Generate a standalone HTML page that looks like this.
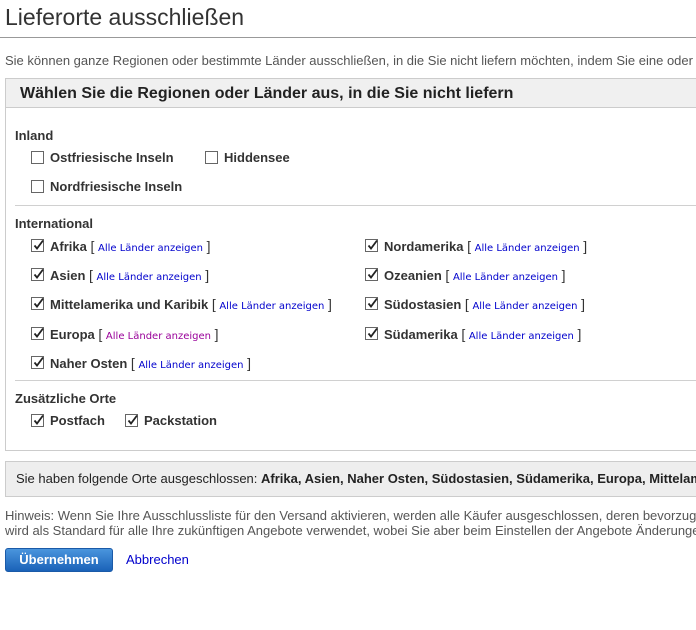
<!DOCTYPE html>
<html><head><meta charset="utf-8"><style>
*{margin:0;padding:0;box-sizing:border-box}
html,body{width:696px;height:630px;overflow:hidden}
body{background:#fff;font-family:"Liberation Sans",Arial,sans-serif;color:#333;position:relative}
#wrap{position:absolute;left:0;top:0;width:696px;height:630px;overflow:hidden}
.a{position:absolute;white-space:nowrap}
.t{font-size:13px;font-weight:bold;color:#333}
.cb{position:absolute;width:13px;height:13px;border:1px solid #666;background:#fff}
.cb svg{position:absolute;left:0;top:-1px}
.lk{font-family:"DejaVu Sans",Verdana,sans-serif;font-size:10px;color:#0000cc;font-weight:normal}
.br{font-weight:normal;color:#333;font-size:14px}
.hr{position:absolute;left:15px;width:681px;height:1px;background:#d0d0d0}
</style></head><body><div id="wrap">
<div class="a" style="left:5px;top:4px;font-size:23px;color:#333">Lieferorte ausschließen</div>
<div style="position:absolute;left:0;width:696px;top:37px;height:1px;background:#999"></div>
<div class="a" style="left:5px;top:53px;font-size:13px;color:#555">Sie können ganze Regionen oder bestimmte Länder ausschließen, in die Sie nicht liefern möchten, indem Sie eine oder</div>
<div style="position:absolute;left:5px;top:78px;width:700px;height:373px;border:1px solid #ccc"></div>
<div style="position:absolute;left:6px;top:79px;width:700px;height:29px;background:#f0f0f0;border-bottom:1px solid #ccc"></div>
<div class="a" style="left:20px;top:85px;font-size:16px;font-weight:bold;color:#222">Wählen Sie die Regionen oder Länder aus, in die Sie nicht liefern</div>

<div class="a t" style="left:15px;top:128px">Inland</div>
<div class="cb" style="left:31px;top:151px"></div><div class="a t" style="left:50px;top:150px">Ostfriesische Inseln</div>
<div class="cb" style="left:205px;top:151px"></div><div class="a t" style="left:224px;top:150px">Hiddensee</div>
<div class="cb" style="left:31px;top:180px"></div><div class="a t" style="left:50px;top:179px">Nordfriesische Inseln</div>
<div class="hr" style="top:205px"></div>
<div class="a t" style="left:15px;top:216px">International</div>

<div id="rows"></div>
<div class="hr" style="top:380px"></div>
<div class="a t" style="left:15px;top:391px">Zusätzliche Orte</div>

<div style="position:absolute;left:5px;top:461px;width:700px;height:36px;background:#eee;border:1px solid #ccc"></div>
<div class="a" style="left:16px;top:471px;font-size:13px;color:#222">Sie haben folgende Orte ausgeschlossen: <b>Afrika, Asien, Naher Osten, Südostasien, Südamerika, Europa, Mittelamerika und Karibik</b></div>
<div class="a" style="left:5px;top:508px;font-size:13px;color:#555;line-height:15px">Hinweis: Wenn Sie Ihre Ausschlussliste für den Versand aktivieren, werden alle Käufer ausgeschlossen, deren bevorzugte<br>wird als Standard für alle Ihre zukünftigen Angebote verwendet, wobei Sie aber beim Einstellen der Angebote Änderungen</div>
<div class="a" style="left:5px;top:548px;width:108px;height:24px;border-radius:3px;background:linear-gradient(#4a95dd,#1a62b8);border:1px solid #1a5aa8;color:#fff;font-weight:bold;font-size:13px;text-align:center;line-height:22px">Übernehmen</div>
<div class="a" style="left:126px;top:552px;font-size:13px;color:#0000cc">Abbrechen</div>
<div id="rows2"></div>
</div>
<script>
var ck='<svg width="13" height="13" viewBox="0 0 13 13"><path d="M2.5 6.5 L5 9.5 L11 1.5" stroke="#222" stroke-width="1.8" fill="none"/></svg>';
var rows=[[31,246,'Afrika',0],[31,275,'Asien',0],[31,304,'Mittelamerika und Karibik',0],[31,334,'Europa',1],[31,363,'Naher Osten',0],
[365,246,'Nordamerika',0],[365,275,'Ozeanien',0],[365,304,'Südostasien',0],[365,334,'Südamerika',0]];
var h='';
rows.forEach(function(r){
h+='<div class="cb" style="left:'+r[0]+'px;top:'+(r[1]-7)+'px">'+ck+'</div>';
h+='<div class="a t" style="left:'+(r[0]+19)+'px;top:'+(r[1]-8)+'px">'+r[2]+' <span class="br">[</span> <span class="lk" style="'+(r[3]?'color:#990099':'')+'">Alle Länder anzeigen</span> <span class="br">]</span></div>';
});
[[31,'Postfach'],[125,'Packstation']].forEach(function(r){
h+='<div class="cb" style="left:'+r[0]+'px;top:414px">'+ck+'</div><div class="a t" style="left:'+(r[0]+19)+'px;top:413px">'+r[1]+'</div>';
});
document.getElementById('rows').outerHTML=h;
</script>
</body></html>
